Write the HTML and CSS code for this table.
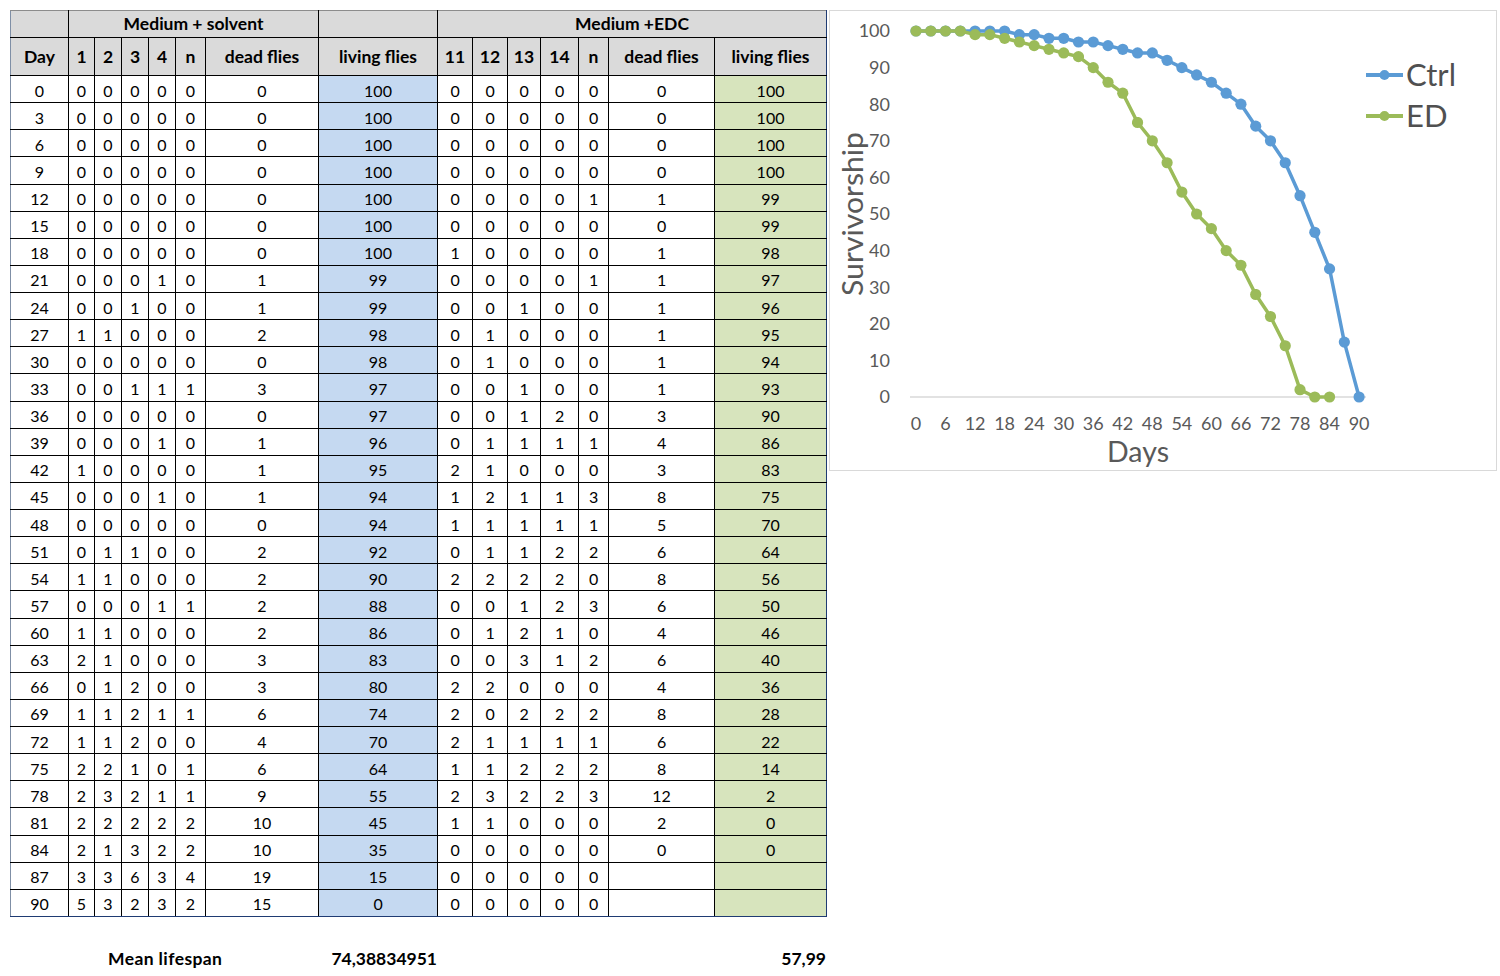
FILE: index.html
```html
<!DOCTYPE html>
<html>
<head>
<meta charset="utf-8">
<title>Survivorship</title>
<link rel="stylesheet" href="styles.css">
</head>
<body>
<div class="page">
  <div class="sheet">
    <table class="data">
      <colgroup>
        <col class="c-day"><col class="c-a"><col class="c-b"><col class="c-b"><col class="c-b"><col class="c-n"><col class="c-dead1"><col class="c-live1">
        <col class="c-11"><col class="c-11"><col class="c-13"><col class="c-14"><col class="c-n"><col class="c-dead2"><col class="c-live2">
      </colgroup>
      <thead>
        <tr class="h1">
          <th></th>
          <th colspan="6">Medium + solvent</th>
          <th></th>
          <th colspan="7">Medium +EDC</th>
        </tr>
        <tr class="h2">
          <th>Day</th><th>1</th><th>2</th><th>3</th><th>4</th><th>n</th><th>dead flies</th><th>living flies</th>
          <th>11</th><th>12</th><th>13</th><th>14</th><th>n</th><th>dead flies</th><th>living flies</th>
        </tr>
      </thead>
      <tbody>
        <tr><td>0</td><td>0</td><td>0</td><td>0</td><td>0</td><td>0</td><td>0</td><td class="blue">100</td><td>0</td><td>0</td><td>0</td><td>0</td><td>0</td><td>0</td><td class="green">100</td></tr>
        <tr><td>3</td><td>0</td><td>0</td><td>0</td><td>0</td><td>0</td><td>0</td><td class="blue">100</td><td>0</td><td>0</td><td>0</td><td>0</td><td>0</td><td>0</td><td class="green">100</td></tr>
        <tr><td>6</td><td>0</td><td>0</td><td>0</td><td>0</td><td>0</td><td>0</td><td class="blue">100</td><td>0</td><td>0</td><td>0</td><td>0</td><td>0</td><td>0</td><td class="green">100</td></tr>
        <tr><td>9</td><td>0</td><td>0</td><td>0</td><td>0</td><td>0</td><td>0</td><td class="blue">100</td><td>0</td><td>0</td><td>0</td><td>0</td><td>0</td><td>0</td><td class="green">100</td></tr>
        <tr><td>12</td><td>0</td><td>0</td><td>0</td><td>0</td><td>0</td><td>0</td><td class="blue">100</td><td>0</td><td>0</td><td>0</td><td>0</td><td>1</td><td>1</td><td class="green">99</td></tr>
        <tr><td>15</td><td>0</td><td>0</td><td>0</td><td>0</td><td>0</td><td>0</td><td class="blue">100</td><td>0</td><td>0</td><td>0</td><td>0</td><td>0</td><td>0</td><td class="green">99</td></tr>
        <tr><td>18</td><td>0</td><td>0</td><td>0</td><td>0</td><td>0</td><td>0</td><td class="blue">100</td><td>1</td><td>0</td><td>0</td><td>0</td><td>0</td><td>1</td><td class="green">98</td></tr>
        <tr><td>21</td><td>0</td><td>0</td><td>0</td><td>1</td><td>0</td><td>1</td><td class="blue">99</td><td>0</td><td>0</td><td>0</td><td>0</td><td>1</td><td>1</td><td class="green">97</td></tr>
        <tr><td>24</td><td>0</td><td>0</td><td>1</td><td>0</td><td>0</td><td>1</td><td class="blue">99</td><td>0</td><td>0</td><td>1</td><td>0</td><td>0</td><td>1</td><td class="green">96</td></tr>
        <tr><td>27</td><td>1</td><td>1</td><td>0</td><td>0</td><td>0</td><td>2</td><td class="blue">98</td><td>0</td><td>1</td><td>0</td><td>0</td><td>0</td><td>1</td><td class="green">95</td></tr>
        <tr><td>30</td><td>0</td><td>0</td><td>0</td><td>0</td><td>0</td><td>0</td><td class="blue">98</td><td>0</td><td>1</td><td>0</td><td>0</td><td>0</td><td>1</td><td class="green">94</td></tr>
        <tr><td>33</td><td>0</td><td>0</td><td>1</td><td>1</td><td>1</td><td>3</td><td class="blue">97</td><td>0</td><td>0</td><td>1</td><td>0</td><td>0</td><td>1</td><td class="green">93</td></tr>
        <tr><td>36</td><td>0</td><td>0</td><td>0</td><td>0</td><td>0</td><td>0</td><td class="blue">97</td><td>0</td><td>0</td><td>1</td><td>2</td><td>0</td><td>3</td><td class="green">90</td></tr>
        <tr><td>39</td><td>0</td><td>0</td><td>0</td><td>1</td><td>0</td><td>1</td><td class="blue">96</td><td>0</td><td>1</td><td>1</td><td>1</td><td>1</td><td>4</td><td class="green">86</td></tr>
        <tr><td>42</td><td>1</td><td>0</td><td>0</td><td>0</td><td>0</td><td>1</td><td class="blue">95</td><td>2</td><td>1</td><td>0</td><td>0</td><td>0</td><td>3</td><td class="green">83</td></tr>
        <tr><td>45</td><td>0</td><td>0</td><td>0</td><td>1</td><td>0</td><td>1</td><td class="blue">94</td><td>1</td><td>2</td><td>1</td><td>1</td><td>3</td><td>8</td><td class="green">75</td></tr>
        <tr><td>48</td><td>0</td><td>0</td><td>0</td><td>0</td><td>0</td><td>0</td><td class="blue">94</td><td>1</td><td>1</td><td>1</td><td>1</td><td>1</td><td>5</td><td class="green">70</td></tr>
        <tr><td>51</td><td>0</td><td>1</td><td>1</td><td>0</td><td>0</td><td>2</td><td class="blue">92</td><td>0</td><td>1</td><td>1</td><td>2</td><td>2</td><td>6</td><td class="green">64</td></tr>
        <tr><td>54</td><td>1</td><td>1</td><td>0</td><td>0</td><td>0</td><td>2</td><td class="blue">90</td><td>2</td><td>2</td><td>2</td><td>2</td><td>0</td><td>8</td><td class="green">56</td></tr>
        <tr><td>57</td><td>0</td><td>0</td><td>0</td><td>1</td><td>1</td><td>2</td><td class="blue">88</td><td>0</td><td>0</td><td>1</td><td>2</td><td>3</td><td>6</td><td class="green">50</td></tr>
        <tr><td>60</td><td>1</td><td>1</td><td>0</td><td>0</td><td>0</td><td>2</td><td class="blue">86</td><td>0</td><td>1</td><td>2</td><td>1</td><td>0</td><td>4</td><td class="green">46</td></tr>
        <tr><td>63</td><td>2</td><td>1</td><td>0</td><td>0</td><td>0</td><td>3</td><td class="blue">83</td><td>0</td><td>0</td><td>3</td><td>1</td><td>2</td><td>6</td><td class="green">40</td></tr>
        <tr><td>66</td><td>0</td><td>1</td><td>2</td><td>0</td><td>0</td><td>3</td><td class="blue">80</td><td>2</td><td>2</td><td>0</td><td>0</td><td>0</td><td>4</td><td class="green">36</td></tr>
        <tr><td>69</td><td>1</td><td>1</td><td>2</td><td>1</td><td>1</td><td>6</td><td class="blue">74</td><td>2</td><td>0</td><td>2</td><td>2</td><td>2</td><td>8</td><td class="green">28</td></tr>
        <tr><td>72</td><td>1</td><td>1</td><td>2</td><td>0</td><td>0</td><td>4</td><td class="blue">70</td><td>2</td><td>1</td><td>1</td><td>1</td><td>1</td><td>6</td><td class="green">22</td></tr>
        <tr><td>75</td><td>2</td><td>2</td><td>1</td><td>0</td><td>1</td><td>6</td><td class="blue">64</td><td>1</td><td>1</td><td>2</td><td>2</td><td>2</td><td>8</td><td class="green">14</td></tr>
        <tr><td>78</td><td>2</td><td>3</td><td>2</td><td>1</td><td>1</td><td>9</td><td class="blue">55</td><td>2</td><td>3</td><td>2</td><td>2</td><td>3</td><td>12</td><td class="green">2</td></tr>
        <tr><td>81</td><td>2</td><td>2</td><td>2</td><td>2</td><td>2</td><td>10</td><td class="blue">45</td><td>1</td><td>1</td><td>0</td><td>0</td><td>0</td><td>2</td><td class="green">0</td></tr>
        <tr><td>84</td><td>2</td><td>1</td><td>3</td><td>2</td><td>2</td><td>10</td><td class="blue">35</td><td>0</td><td>0</td><td>0</td><td>0</td><td>0</td><td>0</td><td class="green">0</td></tr>
        <tr><td>87</td><td>3</td><td>3</td><td>6</td><td>3</td><td>4</td><td>19</td><td class="blue">15</td><td>0</td><td>0</td><td>0</td><td>0</td><td>0</td><td></td><td class="green"></td></tr>
        <tr><td>90</td><td>5</td><td>3</td><td>2</td><td>3</td><td>2</td><td>15</td><td class="blue">0</td><td>0</td><td>0</td><td>0</td><td>0</td><td>0</td><td></td><td class="green"></td></tr>
      </tbody>
    </table>
    <div class="summary">
      <div class="sum-left">
        <span class="sum-label">Mean lifespan</span>
        <span class="sum-val">74,38834951</span>
      </div>
      <div class="sum-right">
        <span class="sum-val">57,99</span>
      </div>
    </div>
  </div>

  <div class="chart">
    <svg class="chart-svg" width="668" height="461" viewBox="0 0 668 461">
      <defs>
        <marker id="mk-blue" viewBox="0 0 12 12" refX="6" refY="6" markerWidth="12" markerHeight="12" markerUnits="userSpaceOnUse">
          <circle cx="6" cy="6" r="5.6" fill="#5b9bd5"/>
        </marker>
        <marker id="mk-green" viewBox="0 0 12 12" refX="6" refY="6" markerWidth="12" markerHeight="12" markerUnits="userSpaceOnUse">
          <circle cx="6" cy="6" r="5.6" fill="#9bbb59"/>
        </marker>
        <marker id="lg-blue" viewBox="0 0 10 10" refX="5" refY="5" markerWidth="10" markerHeight="10" markerUnits="userSpaceOnUse">
          <circle cx="5" cy="5" r="5" fill="#5b9bd5"/>
        </marker>
        <marker id="lg-green" viewBox="0 0 10 10" refX="5" refY="5" markerWidth="10" markerHeight="10" markerUnits="userSpaceOnUse">
          <circle cx="5" cy="5" r="5" fill="#9bbb59"/>
        </marker>
      </defs>
      <line class="grid0" x1="81" y1="387" x2="537" y2="387"/>
      <g class="ylab">
        <text x="61" y="21" dy="0.36em">100</text>
        <text x="61" y="57.6" dy="0.36em">90</text>
        <text x="61" y="94.2" dy="0.36em">80</text>
        <text x="61" y="130.8" dy="0.36em">70</text>
        <text x="61" y="167.4" dy="0.36em">60</text>
        <text x="61" y="204" dy="0.36em">50</text>
        <text x="61" y="240.6" dy="0.36em">40</text>
        <text x="61" y="277.2" dy="0.36em">30</text>
        <text x="61" y="313.8" dy="0.36em">20</text>
        <text x="61" y="350.4" dy="0.36em">10</text>
        <text x="61" y="387" dy="0.36em">0</text>
      </g>
      <g class="xlab">
        <text x="87" y="414" dy="0.36em">0</text>
        <text x="116.54" y="414" dy="0.36em">6</text>
        <text x="146.08" y="414" dy="0.36em">12</text>
        <text x="175.62" y="414" dy="0.36em">18</text>
        <text x="205.16" y="414" dy="0.36em">24</text>
        <text x="234.7" y="414" dy="0.36em">30</text>
        <text x="264.24" y="414" dy="0.36em">36</text>
        <text x="293.78" y="414" dy="0.36em">42</text>
        <text x="323.32" y="414" dy="0.36em">48</text>
        <text x="352.86" y="414" dy="0.36em">54</text>
        <text x="382.4" y="414" dy="0.36em">60</text>
        <text x="411.94" y="414" dy="0.36em">66</text>
        <text x="441.48" y="414" dy="0.36em">72</text>
        <text x="471.02" y="414" dy="0.36em">78</text>
        <text x="500.56" y="414" dy="0.36em">84</text>
        <text x="530.1" y="414" dy="0.36em">90</text>
      </g>
      <text class="atitle" transform="translate(24,204) rotate(-90)" dy="0.36em" textLength="164" lengthAdjust="spacingAndGlyphs">Survivorship</text>
      <text class="atitle" x="309" y="442" dy="0.36em" textLength="62" lengthAdjust="spacingAndGlyphs">Days</text>

      <polyline class="s-blue" points="87,21 101.77,21 116.54,21 131.31,21 146.08,21 160.85,21 175.62,21 190.39,24.66 205.16,24.66 219.93,28.32 234.7,28.32 249.47,31.98 264.24,31.98 279.01,35.64 293.78,39.3 308.55,42.96 323.32,42.96 338.09,50.28 352.86,57.6 367.63,64.92 382.4,72.24 397.17,83.22 411.94,94.2 426.71,116.16 441.48,130.8 456.25,152.76 471.02,185.7 485.79,222.3 500.56,258.9 515.33,332.1 530.1,387"/>
      <polyline class="s-green" points="87,21 101.77,21 116.54,21 131.31,21 146.08,24.66 160.85,24.66 175.62,28.32 190.39,31.98 205.16,35.64 219.93,39.3 234.7,42.96 249.47,46.62 264.24,57.6 279.01,72.24 293.78,83.22 308.55,112.5 323.32,130.8 338.09,152.76 352.86,182.04 367.63,204 382.4,218.64 397.17,240.6 411.94,255.24 426.71,284.52 441.48,306.48 456.25,335.76 471.02,379.68 485.79,387 500.56,387"/>

      <polyline class="lg-line lg-blue" points="537,65 555.5,65 574,65"/>
      <text class="legend" x="577" y="65" dy="0.36em">Ctrl</text>
      <polyline class="lg-line lg-green" points="537,106 555.5,106 574,106"/>
      <text class="legend" x="577" y="106" dy="0.36em">ED</text>
    </svg>
  </div>
</div>
</body>
</html>
```

FILE: styles.css
```css
html, body {
  margin: 0;
  padding: 0;
  background: #ffffff;
}

body {
  font-family: Lato, "Liberation Sans", sans-serif;
  color: #000000;
}

.page {
  display: flex;
  align-items: flex-start;
  gap: 3px;
  padding: 10px 0 0 10px;
}

.sheet {
  display: flex;
  flex-direction: column;
  width: 816px;
}

.data {
  border-collapse: collapse;
  table-layout: fixed;
  width: 816px;
  font-size: 16px;
}

.c-day { width: 58px; }
.c-a { width: 26px; }
.c-b { width: 27px; }
.c-n { width: 30px; }
.c-dead1 { width: 113px; }
.c-live1 { width: 119px; }
.c-11 { width: 35px; }
.c-13 { width: 33px; }
.c-14 { width: 38px; }
.c-dead2 { width: 106px; }
.c-live2 { width: 112px; }

.data th,
.data td {
  border: 1px solid #000000;
  padding: 0;
  text-align: center;
  white-space: nowrap;
  overflow: hidden;
  line-height: 1;
}

.data th {
  background: #dadada;
  font-weight: 700;
  font-size: 17.5px;
}

.data thead tr:first-child th {
  border-top-color: #8c8c8c;
}

.data tr > :first-child {
  border-left-color: #7f8fa6;
}

.data tr > :last-child {
  border-right-color: #1f3b73;
}

.data tbody tr:last-child td {
  border-bottom-color: #1f3b73;
}

.h1 { height: 27px; }
.h2 { height: 38px; }

.data tbody tr { height: 27.13px; }

.data td { padding-top: 3px; }

.data td.blue { background: #c5d9f1; }
.data td.green { background: #d7e4bd; }

.summary {
  display: grid;
  grid-template-columns: 427px 389px;
  margin-top: 31px;
  font-weight: 700;
  font-size: 17.5px;
  line-height: 22px;
}

.sum-left {
  display: flex;
  justify-content: space-between;
  padding-left: 98px;
}

.sum-label {
  letter-spacing: 0.4px;
}

.sum-right {
  display: flex;
  justify-content: flex-end;
}

.chart {
  width: 666px;
  height: 459px;
  border: 1px solid #d9d9d9;
  background: #ffffff;
}

.chart-svg {
  display: block;
  margin: -1px 0 0 -1px;
  overflow: visible;
  font-family: Lato, "Liberation Sans", sans-serif;
}

.grid0 {
  stroke: #d9d9d9;
  stroke-width: 1.5;
}

.ylab text {
  fill: #595959;
  font-size: 18px;
  text-anchor: end;
}

.xlab text {
  fill: #595959;
  font-size: 18px;
  text-anchor: middle;
}

.atitle {
  fill: #595959;
  font-size: 28px;
  text-anchor: middle;
}

.legend {
  fill: #505050;
  font-size: 31px;
}

.s-blue {
  fill: none;
  stroke: #5b9bd5;
  stroke-width: 3.5;
  stroke-linejoin: round;
  marker-start: url(#mk-blue);
  marker-mid: url(#mk-blue);
  marker-end: url(#mk-blue);
}

.s-green {
  fill: none;
  stroke: #9bbb59;
  stroke-width: 3.5;
  stroke-linejoin: round;
  marker-start: url(#mk-green);
  marker-mid: url(#mk-green);
  marker-end: url(#mk-green);
}

.lg-line {
  fill: none;
  stroke-width: 4;
}

.lg-blue {
  stroke: #5b9bd5;
  marker-mid: url(#lg-blue);
}

.lg-green {
  stroke: #9bbb59;
  marker-mid: url(#lg-green);
}
```
